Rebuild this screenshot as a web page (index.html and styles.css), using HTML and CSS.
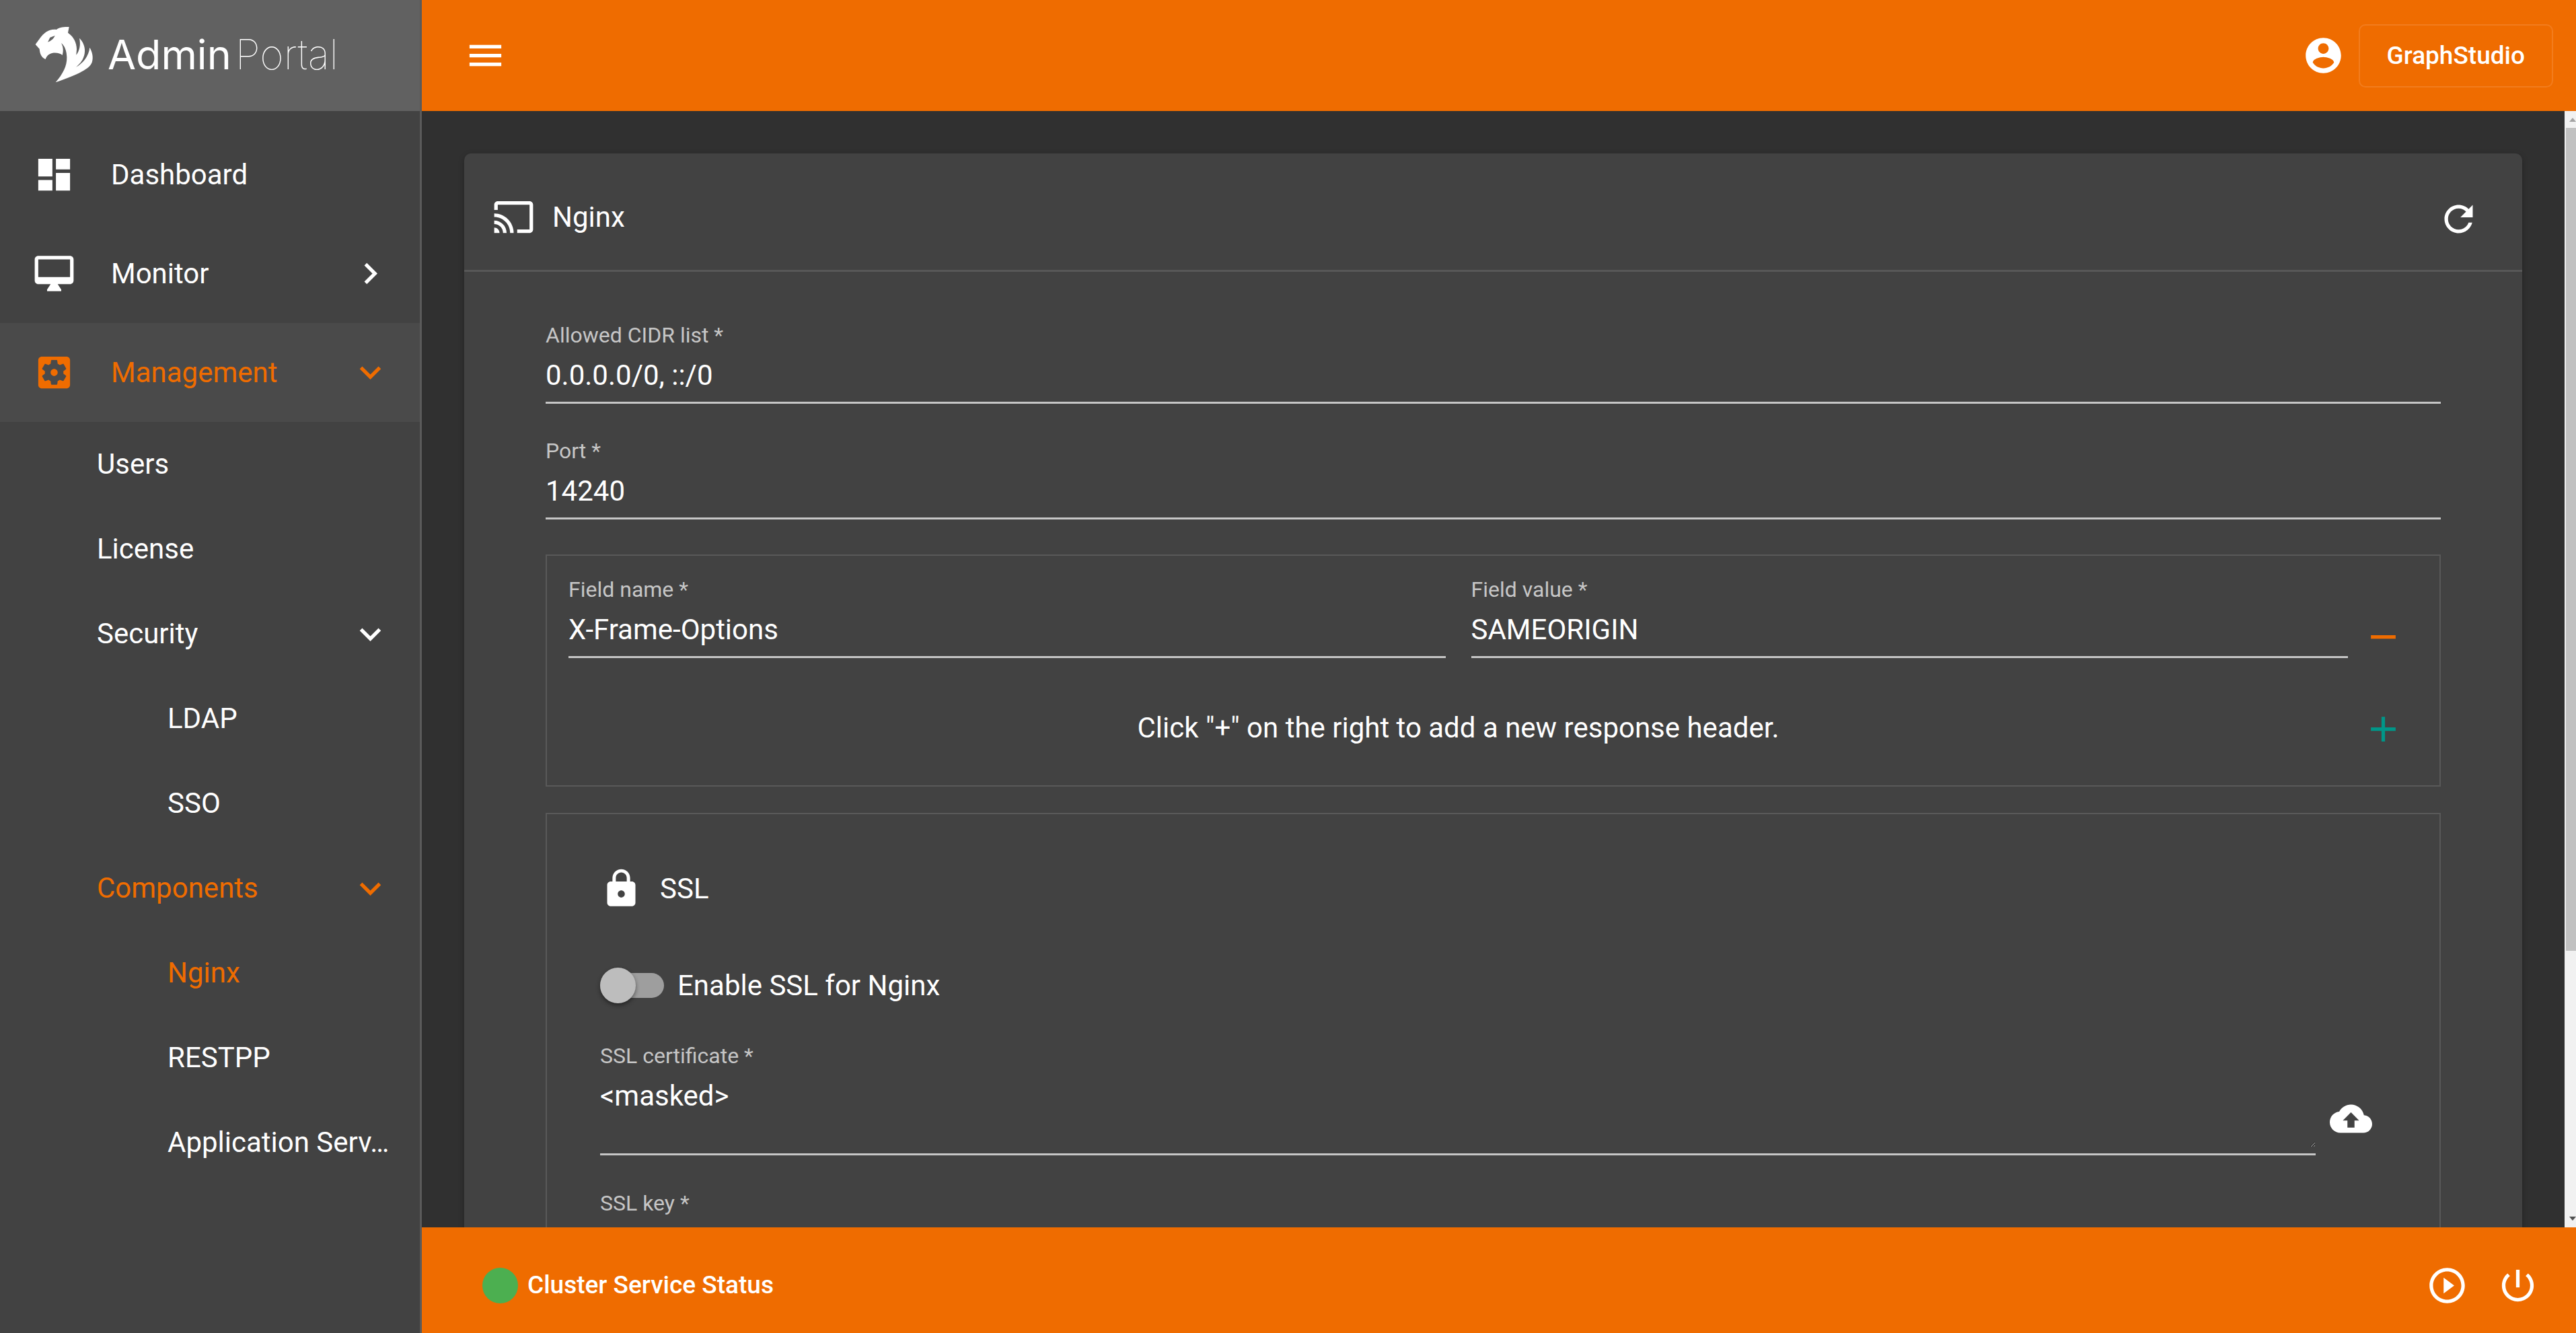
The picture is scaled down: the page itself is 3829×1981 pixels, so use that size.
FILE: index.html
```html
<!DOCTYPE html>
<html lang="en">
<head>
<meta charset="utf-8">
<title>AdminPortal - Nginx</title>
<link rel="stylesheet" href="styles.css">
</head>
<body>
<svg class="sprite" aria-hidden="true">
  <symbol id="chevron-right" viewBox="0 0 24 24"><path d="M10 6L8.590 7.410 13.170 12l-4.580 4.590L10 18l6-6z"/></symbol>
  <symbol id="expand-more" viewBox="0 0 24 24"><path d="M16.590 8.590L12 13.170 7.410 8.590 6 10l6 6 6-6z"/></symbol>
  <symbol id="cloud-upload" viewBox="0 0 24 24"><path d="M19.350 10.040C18.670 6.590 15.640 4 12 4 9.110 4 6.600 5.640 5.350 8.040 2.340 8.360 0 10.910 0 14c0 3.310 2.690 6 6 6h13c2.760 0 5-2.240 5-5 0-2.640-2.050-4.780-4.650-4.960zM14 13v4h-4v-4H7.400L12 8.400 16.600 13H14z"/></symbol>
</svg>
<div class="app">
  <aside class="sidebar">
    <div class="brand">
      <svg class="brand-mark" viewBox="0 0 330 315" aria-hidden="true"><path fill-rule="evenodd" d="M38 108L60 78C75 58 98 38 132 42C142 32 162 29 188 30L183 56C206 72 222 98 222 130L220 155C236 135 240 108 234 80C252 98 262 122 257 150C252 175 240 192 219 209C250 192 276 160 280 122C292 142 297 166 290 188C278 222 205 250 128 277C160 240 179 205 178 165C177 140 170 115 153 102C163 120 163 140 158 156C150 148 130 143 112 147C98 150 88 160 83 174C66 166 58 152 56 128ZM93 98L103 77L125 69C120 82 108 92 93 98Z"/></svg>
      <span class="brand-name"><b>Admin</b><span class="brand-thin">Portal</span></span>
    </div>
    <nav class="nav" aria-label="Main">
      <a class="nav-item" href="#dashboard"><svg class="icon" viewBox="0 0 24 24"><path d="M3 13h8V3H3v10zm0 8h8v-6H3v6zm10 0h8V11h-8v10zm0-18v6h8V3h-8z"/></svg><span class="nav-text">Dashboard</span></a>
      <a class="nav-item" href="#monitor"><svg class="icon" viewBox="0 0 24 24"><path d="M21 2H3c-1.100 0-2 .9-2 2v12c0 1.100.9 2 2 2h7l-2 3v1h8v-1l-2-3h7c1.100 0 2-.9 2-2V4c0-1.100-.9-2-2-2zm0 12H3V4h18v10z"/></svg><span class="nav-text">Monitor</span><svg class="icon"><use href="#chevron-right"/></svg></a>
      <a class="nav-item selected active" href="#management"><svg class="icon" viewBox="0 0 24 24"><path d="M12 10c-1.100 0-2 .9-2 2s.9 2 2 2 2-.9 2-2-.9-2-2-2zm7-7H5c-1.110 0-2 .9-2 2v14c0 1.100.89 2 2 2h14c1.110 0 2-.9 2-2V5c0-1.100-.89-2-2-2zm-1.750 9c0 .23-.02.46-.05.68l1.480 1.160c.13.11.17.3.08.45l-1.400 2.420c-.09.15-.27.21-.43.15l-1.740-.7c-.36.28-.76.51-1.180.69l-.26 1.850c-.03.17-.18.3-.35.3h-2.800c-.17 0-.32-.13-.35-.29l-.26-1.850c-.43-.18-.82-.41-1.180-.69l-1.740.7c-.16.06-.34 0-.43-.15l-1.400-2.420c-.09-.15-.05-.34.08-.45l1.480-1.160c-.03-.23-.05-.46-.05-.69 0-.23.02-.46.05-.68l-1.480-1.160c-.13-.11-.17-.3-.08-.45l1.400-2.420c.09-.15.27-.21.43-.15l1.740.7c.36-.28.76-.51 1.180-.69l.26-1.850c.03-.17.18-.3.35-.3h2.800c.17 0 .32.13.35.29l.26 1.850c.43.18.82.41 1.180.69l1.740-.7c.16-.06.34 0 .43.15l1.400 2.420c.09.15.05.34-.08.45l-1.480 1.160c.03.23.05.46.05.69z"/></svg><span class="nav-text">Management</span><svg class="icon"><use href="#expand-more"/></svg></a>
      <a class="nav-item sub" href="#users"><span class="nav-text">Users</span></a>
      <a class="nav-item sub" href="#license"><span class="nav-text">License</span></a>
      <a class="nav-item sub" href="#security"><span class="nav-text">Security</span><svg class="icon"><use href="#expand-more"/></svg></a>
      <a class="nav-item sub leaf" href="#ldap"><span class="nav-text">LDAP</span></a>
      <a class="nav-item sub leaf" href="#sso"><span class="nav-text">SSO</span></a>
      <a class="nav-item sub active" href="#components"><span class="nav-text">Components</span><svg class="icon"><use href="#expand-more"/></svg></a>
      <a class="nav-item sub leaf active" href="#nginx"><span class="nav-text">Nginx</span></a>
      <a class="nav-item sub leaf" href="#restpp"><span class="nav-text">RESTPP</span></a>
      <a class="nav-item sub leaf" href="#application-server"><span class="nav-text">Application Serv…</span></a>
    </nav>
  </aside>

  <div class="page">
    <header class="topbar">
      <button class="icon-button" type="button" aria-label="Toggle menu"><svg class="icon" viewBox="0 0 24 24"><path d="M3 18h18v-2H3v2zm0-5h18v-2H3v2zm0-7v2h18V6H3z"/></svg></button>
      <div class="topbar-actions">
        <button class="icon-button" type="button" aria-label="Account"><svg class="icon" viewBox="0 0 24 24"><path d="M12 2C6.480 2 2 6.480 2 12s4.480 10 10 10 10-4.480 10-10S17.520 2 12 2zm0 3c1.660 0 3 1.340 3 3s-1.340 3-3 3-3-1.340-3-3 1.340-3 3-3zm0 14.200c-2.500 0-4.710-1.280-6-3.220.03-1.990 4-3.080 6-3.080 1.990 0 5.970 1.090 6 3.080-1.290 1.940-3.500 3.220-6 3.220z"/></svg></button>
        <button class="outline-button" type="button">GraphStudio</button>
      </div>
    </header>

    <div class="viewport">
      <main class="content">
        <section class="card">
          <div class="card-head">
            <h1 class="title"><svg class="icon" viewBox="0 0 24 24"><path d="M21 3H3c-1.100 0-2 .9-2 2v3h2V5h18v14h-7v2h7c1.100 0 2-.9 2-2V5c0-1.100-.9-2-2-2zM1 18v3h3c0-1.660-1.340-3-3-3zm0-4v2c2.760 0 5 2.240 5 5h2c0-3.870-3.130-7-7-7zm0-4v2c4.970 0 9 4.030 9 9h2c0-6.080-4.930-11-11-11z"/></svg>Nginx</h1>
            <button class="icon-button refresh" type="button" aria-label="Refresh"><svg class="icon" viewBox="0 0 24 24"><path d="M17.650 6.350C16.200 4.900 14.210 4 12 4c-4.420 0-7.990 3.580-7.990 8s3.570 8 7.990 8c3.730 0 6.840-2.550 7.730-6h-2.080c-.82 2.330-3.040 4-5.650 4-3.310 0-6-2.690-6-6s2.690-6 6-6c1.660 0 3.140.69 4.220 1.780L13 11h7V4l-2.350 2.350z"/></svg></button>
          </div>
          <form class="form">
            <div class="field"><label for="cidr">Allowed CIDR list *</label><input id="cidr" type="text" value="0.0.0.0/0, ::/0"></div>
            <div class="field"><label for="port">Port *</label><input id="port" type="text" value="14240"></div>
            <div class="panels">
              <div class="panel headers">
                <div class="row">
                  <div class="pair">
                    <div class="field"><label for="header-name">Field name *</label><input id="header-name" type="text" value="X-Frame-Options"></div>
                    <div class="field"><label for="header-value">Field value *</label><input id="header-value" type="text" value="SAMEORIGIN"></div>
                  </div>
                  <button class="icon-button remove" type="button" aria-label="Remove header"><svg class="icon" viewBox="0 0 24 24"><path d="M19 13H5v-2h14v2z"/></svg></button>
                </div>
                <div class="row">
                  <p class="hint">Click "+" on the right to add a new response header.</p>
                  <button class="icon-button add" type="button" aria-label="Add header"><svg class="icon" viewBox="0 0 24 24"><path d="M19 13h-6v6h-2v-6H5v-2h6V5h2v6h6v2z"/></svg></button>
                </div>
              </div>
              <div class="panel ssl">
                <h2 class="title"><svg class="icon" viewBox="0 0 24 24"><path d="M18 8h-1V6c0-2.760-2.240-5-5-5S7 3.240 7 6v2H6c-1.100 0-2 .9-2 2v10c0 1.100.9 2 2 2h12c1.100 0 2-.9 2-2V10c0-1.100-.9-2-2-2zm-6 9c-1.100 0-2-.9-2-2s.9-2 2-2 2 .9 2 2-.9 2-2 2zm3.100-9H8.900V6c0-1.710 1.390-3.100 3.100-3.100 1.710 0 3.100 1.390 3.100 3.100v2z"/></svg>SSL</h2>
                <div class="toggle"><input id="enable-ssl" type="checkbox" role="switch"><label for="enable-ssl">Enable SSL for Nginx</label></div>
                <div class="uploads">
                  <div class="row">
                    <div class="field"><label for="ssl-cert">SSL certificate *</label><textarea id="ssl-cert">&lt;masked&gt;</textarea></div>
                    <button class="icon-button upload" type="button" aria-label="Upload certificate"><svg class="icon"><use href="#cloud-upload"/></svg></button>
                  </div>
                  <div class="row">
                    <div class="field"><label for="ssl-key">SSL key *</label><textarea id="ssl-key"></textarea></div>
                    <button class="icon-button upload" type="button" aria-label="Upload key"><svg class="icon"><use href="#cloud-upload"/></svg></button>
                  </div>
                </div>
              </div>
            </div>
          </form>
        </section>
      </main>
      <div class="scrollbar" aria-hidden="true">
        <svg class="scroll-arrow up" viewBox="0 0 25 25"><path d="M7 16L12 10L17 16z"/></svg>
        <div class="scroll-track"><div class="scroll-thumb"></div></div>
        <svg class="scroll-arrow" viewBox="0 0 25 25"><path d="M7 9L12 15L17 9z"/></svg>
      </div>
    </div>

    <footer class="statusbar">
      <div class="status"><span class="status-dot"></span>Cluster Service Status</div>
      <div class="status-actions">
        <button class="icon-button" type="button" aria-label="Start services"><svg class="icon" viewBox="0 0 24 24"><path d="M10 16.500l6-4.500-6-4.500v9zM12 2C6.480 2 2 6.480 2 12s4.480 10 10 10 10-4.480 10-10S17.520 2 12 2zm0 18c-4.410 0-8-3.590-8-8s3.590-8 8-8 8 3.590 8 8-3.590 8-8 8z"/></svg></button>
        <button class="icon-button" type="button" aria-label="Stop services"><svg class="icon" viewBox="0 0 24 24"><path d="M13 3h-2v10h2V3zm4.830 2.170l-1.420 1.420C17.990 7.860 19 9.810 19 12c0 3.870-3.130 7-7 7s-7-3.130-7-7c0-2.190 1.010-4.140 2.580-5.420L6.170 5.170C4.230 6.820 3 9.260 3 12c0 4.970 4.030 9 9 9s9-4.030 9-9c0-2.740-1.230-5.180-3.170-6.830z"/></svg></button>
      </div>
    </footer>
  </div>
</div>
</body>
</html>
```

FILE: styles.css
```css
* {
  box-sizing: border-box;
}

body {
  margin: 0;
  background: #303030;
  color: #fff;
  font: 400 42px/48px Roboto, "Liberation Sans", sans-serif;
}

h1, h2, p {
  margin: 0;
}

button, input, textarea {
  margin: 0;
  padding: 0;
  border: 0;
  background: none;
  color: inherit;
  font: inherit;
}

.sprite {
  display: none;
}

.icon {
  display: block;
  flex: none;
  width: 63px;
  height: 63px;
  fill: currentColor;
}

.icon-button {
  flex: none;
  cursor: pointer;
}

.app {
  display: flex;
  height: 100vh;
}

/* Sidebar */
.sidebar {
  flex: none;
  width: 627px;
  overflow: hidden;
  border-right: 3px solid #5a5a5a;
  background: #424242;
}

.brand {
  display: flex;
  align-items: center;
  gap: 10px;
  height: 165px;
  padding-left: 40px;
  background: #616161;
}

.brand-mark {
  width: 110px;
  height: 105px;
  fill: #fff;
}

.brand-name {
  padding-bottom: 4px;
  font-family: Inter, "Open Sans", sans-serif;
  font-size: 61px;
  line-height: 64px;
}

.brand-name b {
  font-weight: 400;
}

.brand-thin {
  margin-left: 6px;
  font-weight: 100;
}

.nav {
  padding-top: 21px;
}

.nav-item {
  display: flex;
  align-items: center;
  gap: 53px;
  height: 147px;
  padding: 0 42px 0 49px;
  color: #fff;
  text-decoration: none;
}

.nav-item.sub {
  height: 126px;
  padding-left: 144px;
}

.nav-item.leaf {
  padding-left: 249px;
}

.nav-item.selected {
  background: #4a4a4a;
}

.nav-item.active {
  color: #ef6c00;
}

.nav-text {
  flex: 1;
  min-width: 0;
  white-space: nowrap;
}

/* Page frame */
.page {
  display: flex;
  flex: 1;
  flex-direction: column;
  min-width: 0;
}

.topbar,
.statusbar {
  display: flex;
  flex: none;
  align-items: center;
  justify-content: space-between;
  background: #ef6c00;
  font-size: 37px;
  font-weight: 500;
}

.topbar {
  height: 165px;
  padding: 0 34px 0 63px;
}

.topbar-actions {
  display: flex;
  align-items: center;
  gap: 21px;
}

.outline-button {
  height: 94px;
  padding: 0 40px;
  border: 2px solid #f27c1d;
  border-radius: 10px;
}

.statusbar {
  height: 157px;
  padding: 15px 55px 0 90px;
}

.status {
  display: flex;
  align-items: center;
  gap: 14px;
}

.status-dot {
  width: 53px;
  height: 53px;
  border-radius: 50%;
  background: #4caf50;
}

.status-actions {
  display: flex;
  gap: 42px;
}

.viewport {
  display: flex;
  flex: 1;
  min-height: 0;
}

.content {
  flex: 1;
  min-width: 0;
  overflow: hidden;
  padding: 63px;
}

.scrollbar {
  display: flex;
  flex: none;
  flex-direction: column;
  width: 17px;
  overflow: hidden;
  background: #f1f1f1;
}

.scroll-arrow {
  flex: none;
  width: 25px;
  height: 25px;
  fill: #505050;
}

.scroll-arrow.up {
  fill: #a3a3a3;
}

.scroll-track {
  flex: 1;
  padding-left: 2px;
}

.scroll-thumb {
  height: 76%;
  background: #c1c1c1;
}

/* Card */
.card {
  border-radius: 10px;
  background: #424242;
  box-shadow: 0 3px 8px rgba(0, 0, 0, 0.25);
}

.card-head {
  display: flex;
  justify-content: space-between;
  padding: 63px 63px 44px 42px;
  border-bottom: 3px solid #575757;
}

.title {
  display: flex;
  align-items: center;
  gap: 26px;
  height: 63px;
  font-size: 42px;
  font-weight: 400;
}

.refresh {
  margin-top: 3px;
}

.form {
  display: flex;
  flex-direction: column;
  gap: 52px;
  padding: 76px 121px;
}

.field {
  display: flex;
  flex: 1;
  flex-direction: column;
  min-width: 0;
  border-bottom: 3px solid #c6c6c6;
}

.field label {
  margin-bottom: 18px;
  color: #c6c6c6;
  font-size: 32px;
  line-height: 36px;
}

.field input {
  width: 100%;
  height: 48px;
  margin-bottom: 15px;
}

.field textarea {
  height: 100px;
  margin-bottom: 9px;
  resize: vertical;
}

.panels {
  display: flex;
  flex-direction: column;
  gap: 39px;
}

.panel {
  display: flex;
  flex-direction: column;
  border: 2px solid #595959;
}

.headers {
  gap: 74px;
  padding: 32px 52px 52px 32px;
}

.row {
  display: flex;
  gap: 21px;
}

.pair {
  display: flex;
  flex: 1;
  gap: 38px;
}

.hint {
  flex: 1;
  line-height: 60px;
  text-align: center;
}

.remove {
  align-self: flex-end;
  color: #ef6c00;
}

.add {
  color: #009688;
}

.ssl {
  padding: 79px 100px 79px 79px;
}

.toggle {
  display: flex;
  align-items: center;
  gap: 20px;
  height: 63px;
  margin: 81px 0 55px;
}

.toggle input {
  display: flex;
  align-items: center;
  width: 95px;
  height: 37px;
  border-radius: 19px;
  background: #9e9e9e;
  appearance: none;
}

.toggle input::before {
  flex: none;
  width: 53px;
  height: 53px;
  border-radius: 50%;
  background: #bdbdbd;
  box-shadow: 0 3px 6px rgba(0, 0, 0, 0.45);
  content: "";
}

.uploads {
  display: flex;
  flex-direction: column;
  gap: 53px;
}

.upload {
  align-self: flex-end;
  margin-bottom: 23px;
}
```
